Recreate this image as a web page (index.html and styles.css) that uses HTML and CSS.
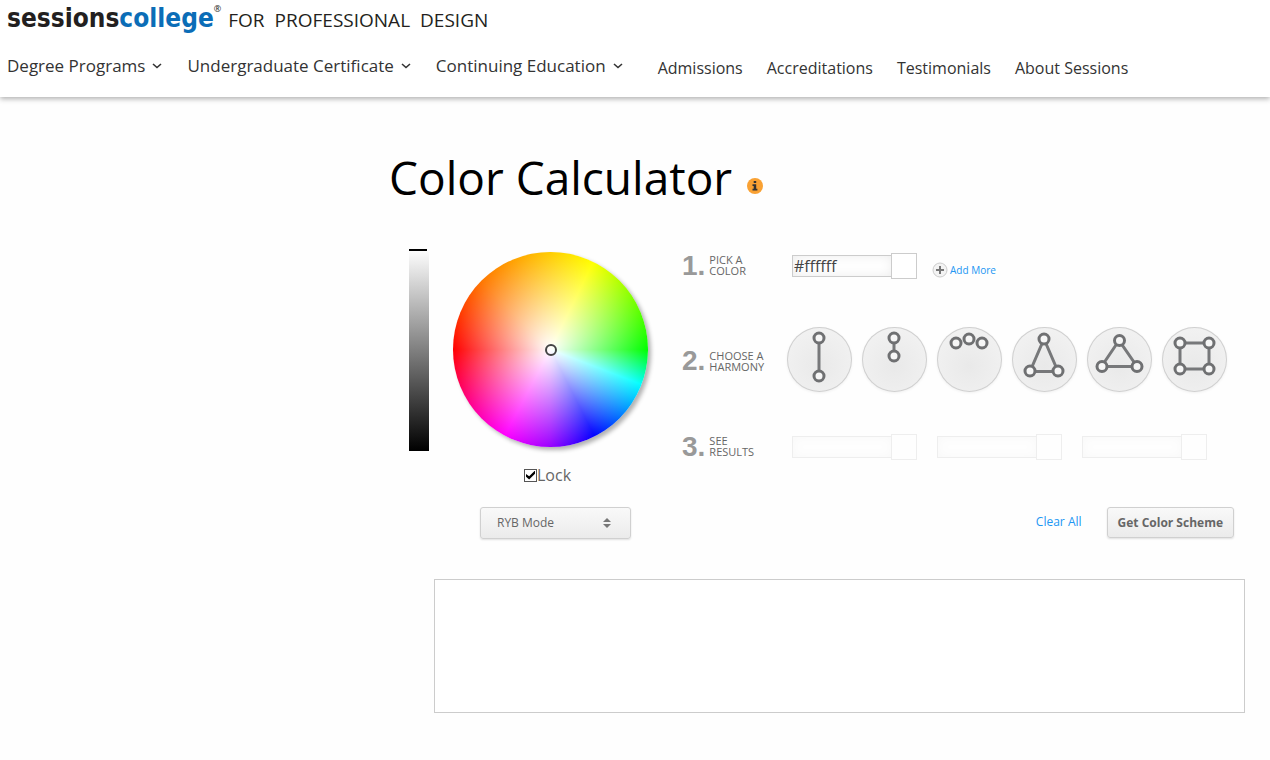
FILE: index.html
```html
<!DOCTYPE html>
<html lang="en">
<head>
    <meta charset="UTF-8">
    <meta name="viewport" content="width=device-width, initial-scale=1.0">
    <title>Color Calculator</title>
    <link rel="stylesheet" href="styles.css">
</head>
<body>
    <header class="siteHeader">
        <a class="logo" href="#">
            <span class="logoName">sessions<span class="blue">college</span></span>
            <span class="logoMark">®</span>
            <span class="logoTagline"><span>FOR</span> <span>PROFESSIONAL</span> <span>DESIGN</span></span>
        </a>
        <nav class="mainNav">
            <div class="navMenus">
                <button type="button">Degree Programs <svg width="10" height="6" viewBox="0 0 10 6"><path d="M1 1 L5 4.5 L9 1"/></svg></button>
                <button type="button">Undergraduate Certificate <svg width="10" height="6" viewBox="0 0 10 6"><path d="M1 1 L5 4.5 L9 1"/></svg></button>
                <button type="button">Continuing Education <svg width="10" height="6" viewBox="0 0 10 6"><path d="M1 1 L5 4.5 L9 1"/></svg></button>
            </div>
            <div class="navLinks">
                <a href="#">Admissions</a>
                <a href="#">Accreditations</a>
                <a href="#">Testimonials</a>
                <a href="#">About Sessions</a>
            </div>
        </nav>
    </header>

    <main>
        <div class="pageTitle">
            <h1>Color Calculator</h1>
            <button type="button" class="infoBtn" aria-label="Info">
                <svg width="16" height="16" viewBox="0 0 16 16">
                    <circle cx="8" cy="8" r="8" fill="#f9a133"/>
                    <path d="M6.7 3h2.5v2H6.7z M5.5 6.3h3.7v4.5h1.2v1.6H5.5v-1.6h1.2V7.9H5.5z" fill="#333"/>
                </svg>
            </button>
        </div>

        <form class="calculator">
            <div class="picker">
                <div class="pickerTop">
                    <input type="range" class="brightness" min="0" max="100" value="100" aria-label="Brightness">
                    <div class="wheel"><span class="wheelHandle"></span></div>
                </div>
                <label class="lock"><input type="checkbox" checked>Lock</label>
                <div class="mode">
                    <select aria-label="Color mode">
                        <option>RYB Mode</option>
                        <option>RGB Mode</option>
                    </select>
                    <svg class="modeArrows" width="8" height="10" viewBox="0 0 8 10"><path d="M0 4 L4 0 L8 4z M0 6 L8 6 L4 10z" fill="#777"/></svg>
                </div>
            </div>

            <div class="steps">
                <div class="step">
                    <label class="stepLabel" for="color"><b>1.</b><span>PICK A<br>COLOR</span></label>
                    <div class="fields">
                        <div class="field"><input type="text" id="color" value="#ffffff"><span class="swatch"></span></div>
                        <button type="button" class="addMore">
                            <svg width="16" height="16" viewBox="0 0 16 16"><circle cx="8" cy="8" r="7" fill="#f3f3f3" stroke="#ccc"/><path d="M8 4v8M4 8h8" stroke="#777" stroke-width="2"/></svg>
                            Add More
                        </button>
                    </div>
                </div>

                <div class="step stepHarmony">
                    <div class="stepLabel"><b>2.</b><span>CHOOSE A<br>HARMONY</span></div>
                    <div class="harmonies">
                        <button type="button" aria-label="Complementary">
                            <svg viewBox="0 0 65 65"><path d="M32 11v38"/><circle cx="32" cy="11" r="5"/><circle cx="32" cy="49" r="5"/></svg>
                        </button>
                        <button type="button" aria-label="Monochromatic">
                            <svg viewBox="0 0 65 65"><path d="M32 11v18"/><circle cx="32" cy="11" r="5"/><circle cx="32" cy="29" r="5"/></svg>
                        </button>
                        <button type="button" aria-label="Analogous">
                            <svg viewBox="0 0 65 65"><circle cx="19" cy="16" r="5"/><circle cx="32" cy="12" r="5"/><circle cx="45" cy="16" r="5"/></svg>
                        </button>
                        <button type="button" aria-label="Split complementary">
                            <svg viewBox="0 0 65 65"><path d="M32 12L18 44.500H46z"/><circle cx="32" cy="12" r="5"/><circle cx="18" cy="44" r="5"/><circle cx="46" cy="44" r="5"/></svg>
                        </button>
                        <button type="button" aria-label="Triadic">
                            <svg viewBox="0 0 65 65"><path d="M32 13.500L14.500 39.500H50z"/><circle cx="32.500" cy="13.500" r="5"/><circle cx="15" cy="39.500" r="5"/><circle cx="50" cy="39.500" r="5"/></svg>
                        </button>
                        <button type="button" aria-label="Tetradic">
                            <svg viewBox="0 0 65 65"><path d="M18 16H47V42H18z"/><circle cx="18" cy="16" r="5"/><circle cx="47" cy="16" r="5"/><circle cx="18" cy="42" r="5"/><circle cx="47" cy="42" r="5"/></svg>
                        </button>
                    </div>
                </div>

                <div class="step stepResults">
                    <div class="stepLabel"><b>3.</b><span>SEE<br>RESULTS</span></div>
                    <div class="fields">
                        <div class="field"><input type="text" aria-label="Result 1" disabled><span class="swatch"></span></div>
                        <div class="field"><input type="text" aria-label="Result 2" disabled><span class="swatch"></span></div>
                        <div class="field"><input type="text" aria-label="Result 3" disabled><span class="swatch"></span></div>
                    </div>
                </div>

                <div class="actions">
                    <a href="#">Clear All</a>
                    <button type="button" class="schemeBtn">Get Color Scheme</button>
                </div>
            </div>
        </form>

        <div class="schemeBox"></div>
    </main>
</body>
</html>
```
FILE: styles.css
```css
* {
    box-sizing: border-box;
}
body {
    margin: 0;
    background: #fefefe;
    color: #666;
    font-family: "Open Sans", Arial, sans-serif;
    font-size: 16px;
}
a {
    text-decoration: none;
}
button, input, select {
    margin: 0;
    font-family: inherit;
}
button {
    padding: 0;
    border: none;
    background: none;
    cursor: pointer;
}
svg {
    display: block;
}

/* header */
.siteHeader {
    height: 97px;
    padding: 3px 7px 0;
    background: #fff;
    box-shadow: 0 2px 5px rgba(0, 0, 0, 0.3);
}
.logo {
    display: flex;
    align-items: baseline;
    height: 30px;
    line-height: 30px;
    color: #231f20;
}
.logoName {
    font-family: "DejaVu Sans Condensed", "DejaVu Sans", Verdana, sans-serif;
    font-size: 26px;
    font-weight: 700;
}
.blue {
    color: #0b6db7;
}
.logoMark {
    align-self: flex-start;
    font-size: 9px;
    line-height: 12px;
}
.logoTagline {
    display: flex;
    gap: 10px;
    margin-left: 7px;
    font-size: 19px;
}
.mainNav {
    display: flex;
    margin-top: 21px;
}
.navMenus, .navLinks {
    display: flex;
    gap: 24px;
    line-height: 24px;
}
.navMenus {
    gap: 25px;
}
.navMenus button {
    display: flex;
    align-items: center;
    gap: 7px;
    height: 24px;
    color: #333;
    font-size: 17px;
    line-height: 24px;
}
.navMenus path {
    fill: none;
    stroke: #333;
    stroke-width: 1.6;
}
.navLinks {
    margin-left: 35px;
    padding-top: 2px;
}
.navLinks a {
    color: #333;
}

/* title */
main {
    padding: 49px 25px 0 389px;
}
.pageTitle {
    display: flex;
    align-items: center;
    gap: 15px;
}
h1 {
    margin: 0;
    color: #000;
    font-size: 46px;
    font-weight: 400;
    line-height: 62px;
}
.infoBtn {
    margin-top: 18px;
}

/* calculator */
.calculator {
    display: flex;
    gap: 34px;
    padding: 41px 11px 0 20px;
}
.picker {
    flex: none;
    width: 239px;
}
.pickerTop {
    display: flex;
    gap: 24px;
}
.brightness {
    appearance: none;
    writing-mode: vertical-lr;
    direction: rtl;
    width: 20px;
    height: 202px;
    background: linear-gradient(#fff, #000);
}
.brightness::-webkit-slider-thumb {
    appearance: none;
    width: 18px;
    height: 2px;
    margin-right: 2px;
    background: #000;
}
.wheel {
    display: flex;
    align-items: center;
    justify-content: center;
    width: 195px;
    height: 195px;
    margin-top: 3px;
    border-radius: 50%;
    background:
        radial-gradient(closest-side, #fff, rgba(255, 255, 255, 0)),
        conic-gradient(#ffcc00 0deg, #ffff00 26deg, #00ff00 90deg, #00ffff 111deg, #0000ff 153deg, #9900ff 180deg, #ff00ff 208deg, #ff0000 270deg, #ff7700 315deg, #ffcc00 360deg);
    box-shadow: 3px 3px 4px rgba(0, 0, 0, 0.3);
}
.wheelHandle {
    width: 12px;
    height: 12px;
    border: 2px solid #444;
    border-radius: 50%;
}
.lock {
    display: flex;
    align-items: center;
    height: 24px;
    margin: 12px 0 0 115px;
}
.lock input {
    appearance: none;
    width: 13px;
    height: 13px;
    border: 1px solid #555;
    background: #fff;
}
.lock input:checked::after {
    content: "";
    display: block;
    height: 9px;
    margin: 1px;
    background: #000;
    clip-path: polygon(0 40%, 0 70%, 35% 100%, 100% 35%, 100% 0, 35% 65%);
}
.mode {
    position: relative;
    width: 151px;
    margin: 20px 0 0 71px;
}
.mode select {
    appearance: none;
    display: block;
    width: 100%;
    height: 32px;
    padding: 0 16px 1px;
    color: #666;
    font-size: 12px;
}
.mode select, .schemeBtn {
    border: 1px solid #d0d0d0;
    border-radius: 3px;
    background: linear-gradient(#f9f9f9, #ebebeb);
    box-shadow: 0 1px 2px rgba(0, 0, 0, 0.12);
}
.modeArrows {
    position: absolute;
    top: 11px;
    right: 20px;
    pointer-events: none;
}

/* steps */
.steps {
    flex: 1;
    padding-top: 4px;
}
.step {
    display: flex;
    align-items: center;
    margin-bottom: 48px;
}
.stepHarmony {
    margin-bottom: 42px;
}
.stepLabel {
    display: flex;
    flex: none;
    align-items: center;
    gap: 4px;
    width: 105px;
    height: 28px;
    margin: -2px 0;
    padding-bottom: 2px;
    font-size: 11px;
    line-height: 11px;
}
.stepHarmony .stepLabel {
    padding: 2px 0 0;
}
.stepLabel b {
    color: #999;
    font-family: Arial, "Liberation Sans", sans-serif;
    font-size: 28px;
}
.fields {
    display: flex;
    gap: 20px;
    padding-left: 5px;
}
.field {
    display: flex;
    align-items: center;
    width: 125px;
}
.field input {
    width: 100px;
    height: 22px;
    padding: 0 1px;
    border: 1px solid #ccc;
    border-right: none;
    background: #fff;
    box-shadow: inset 0 0 12px #ececec;
    color: #444;
    font-size: 16px;
}
.swatch {
    flex: none;
    width: 26px;
    height: 26px;
    margin-left: -1px;
    border: 1px solid #ccc;
    background: #fff;
}
.stepResults .field {
    opacity: 0.3;
}
.addMore {
    display: flex;
    align-items: center;
    gap: 2px;
    height: 16px;
    margin: 9px 0 0 -5px;
    color: #2196f3;
    font-size: 10px;
    line-height: 16px;
}
.harmonies {
    display: flex;
    gap: 10px;
}
.harmonies button {
    width: 65px;
    height: 65px;
    border-radius: 50%;
    background: radial-gradient(circle at 50% 60%, #e9e9e9, #f4f4f4);
    box-shadow: inset 0 0 0 1px #d0d0d0, 0 1px 3px rgba(0, 0, 0, 0.06);
}
.harmonies path {
    fill: none;
    stroke: #77787a;
    stroke-width: 3;
}
.harmonies circle {
    fill: #f6f6f6;
    stroke: #6f7072;
    stroke-width: 3;
}
.actions {
    display: flex;
    align-items: center;
    justify-content: flex-end;
    gap: 25px;
    margin-top: -1px;
    font-size: 12px;
}
.actions a {
    padding-bottom: 2px;
    color: #2196f3;
}
.schemeBtn {
    height: 31px;
    padding: 0 10px;
    color: #666;
    font-size: 12px;
    font-weight: 700;
}

/* generated scheme */
.schemeBox {
    height: 134px;
    margin: 40px 0 0 45px;
    border: 1px solid #ccc;
    background: #fff;
}
```
